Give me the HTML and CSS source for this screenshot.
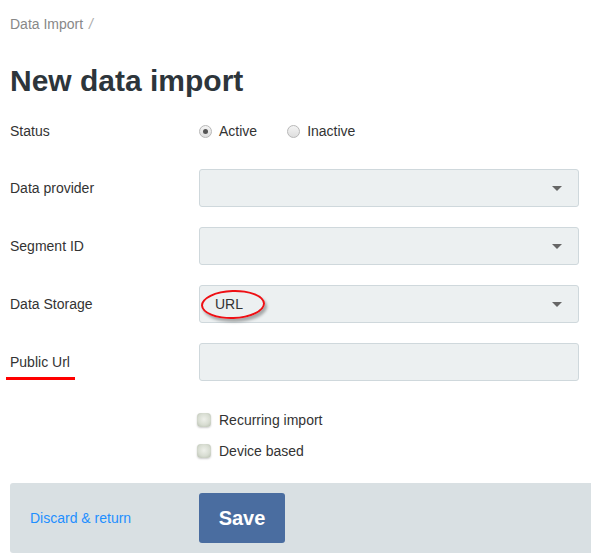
FILE: index.html
```html
<!DOCTYPE html>
<html>
<head>
<meta charset="utf-8">
<link rel="stylesheet" href="styles.css">
</head>
<body>
<div class="page">
  <div class="breadcrumb">Data Import <span class="sep">/</span></div>
  <h1 class="title">New data import</h1>

  <div class="row row-status">
    <div class="label">Status</div>
    <div class="field radios">
      <label class="radio"><span class="radio-dot checked"></span>Active</label>
      <label class="radio"><span class="radio-dot"></span>Inactive</label>
    </div>
  </div>

  <div class="row">
    <div class="label">Data provider</div>
    <div class="field"><div class="select"><span class="caret"></span></div></div>
  </div>

  <div class="row">
    <div class="label">Segment ID</div>
    <div class="field"><div class="select"><span class="caret"></span></div></div>
  </div>

  <div class="row">
    <div class="label">Data Storage</div>
    <div class="field"><div class="select"><span class="value">URL</span><span class="caret"></span><span class="ellipse"></span></div></div>
  </div>

  <div class="row">
    <div class="label"><span class="underlined">Public Url</span></div>
    <div class="field"><div class="input"></div></div>
  </div>

  <div class="checks">
    <label class="check"><span class="box"></span>Recurring import</label>
    <label class="check"><span class="box"></span>Device based</label>
  </div>

  <div class="footer">
    <div class="footer-link"><a href="#">Discard &amp; return</a></div>
    <button class="save">Save</button>
  </div>
</div>
</body>
</html>
```

FILE: styles.css
```css
html, body {
  margin: 0;
  padding: 0;
  background: #fff;
  overflow: hidden;
}
body {
  font-family: "Liberation Sans", Arial, sans-serif;
  font-size: 14px;
  color: #333;
}
.page {
  padding: 14px 12px 0 10px;
}
.breadcrumb {
  font-size: 14px;
  line-height: 20px;
  color: #888;
}
.breadcrumb .sep {
  color: #aaa;
  margin-left: 2px;
  font-style: italic;
}
.title {
  margin: 29px 0 0 0;
  font-size: 30px;
  line-height: 36px;
  font-weight: bold;
  color: #2d353b;
}
.row {
  display: flex;
  align-items: center;
  height: 38px;
  margin-bottom: 20px;
}
.row-status {
  margin-top: 13px;
  margin-bottom: 19px;
}
.label {
  width: 189px;
  flex: none;
  color: #333;
}
.field {
  flex: 1;
}
.radios {
  display: flex;
  align-items: center;
}
.radio {
  display: flex;
  align-items: center;
  color: #333;
  margin-right: 30px;
}
.radio-dot {
  width: 11px;
  height: 11px;
  border-radius: 50%;
  border: 1px solid #b8b8b8;
  background: linear-gradient(#f4f4f4, #dedede);
  margin-right: 7px;
  position: relative;
  flex: none;
}
.radio-dot.checked::after {
  content: "";
  position: absolute;
  left: 3px;
  top: 3px;
  width: 5px;
  height: 5px;
  border-radius: 50%;
  background: #555;
}
.select, .input {
  position: relative;
  height: 36px;
  border: 1px solid #cfd8dc;
  border-radius: 3px;
  background: #ecf0f1;
  display: flex;
  align-items: center;
}
.value {
  padding-left: 15px;
  color: #333;
}
.caret {
  position: absolute;
  right: 16px;
  top: 16px;
  width: 0;
  height: 0;
  border-left: 5px solid transparent;
  border-right: 5px solid transparent;
  border-top: 5px solid #666;
}
.ellipse {
  position: absolute;
  left: 1px;
  top: 4px;
  width: 60px;
  height: 25px;
  border: 2px solid #ee0f14;
  border-radius: 50%;
  box-shadow: 2px 3px 3px rgba(0, 0, 0, 0.3);
  transform: rotate(-2deg);
}
.underlined {
  position: relative;
}
.underlined::after {
  content: "";
  position: absolute;
  left: -4px;
  width: 69px;
  top: 23px;
  height: 3px;
  background: #f00;
}
.checks {
  margin-top: 29px;
  padding-left: 189px;
  display: flex;
  flex-direction: column;
  gap: 11px;
}
.check {
  display: flex;
  align-items: center;
  height: 20px;
  color: #333;
}
.box {
  width: 14px;
  height: 14px;
  border-radius: 4px;
  background: radial-gradient(circle at 50% 45%, #eef0ea 0%, #d8ddd2 55%, #b4bbac 100%);
  box-shadow: 0 1px 2px rgba(0,0,0,0.2);
  margin-left: -2px;
  margin-right: 8px;
  flex: none;
}
.footer {
  margin-top: 22px;
  margin-right: -30px;
  background: #d9e0e3;
  border-radius: 3px;
  padding: 10px 0;
  display: flex;
  align-items: center;
}
.footer-link {
  width: 169px;
  padding-left: 20px;
  flex: none;
}
.footer-link a {
  color: #1e8fff;
  text-decoration: none;
}
.save {
  width: 86px;
  height: 50px;
  border: none;
  border-radius: 3px;
  background: #4a6da0;
  color: #fff;
  font-family: "Liberation Sans", Arial, sans-serif;
  font-weight: bold;
  font-size: 20px;
  padding: 0;
}
```
